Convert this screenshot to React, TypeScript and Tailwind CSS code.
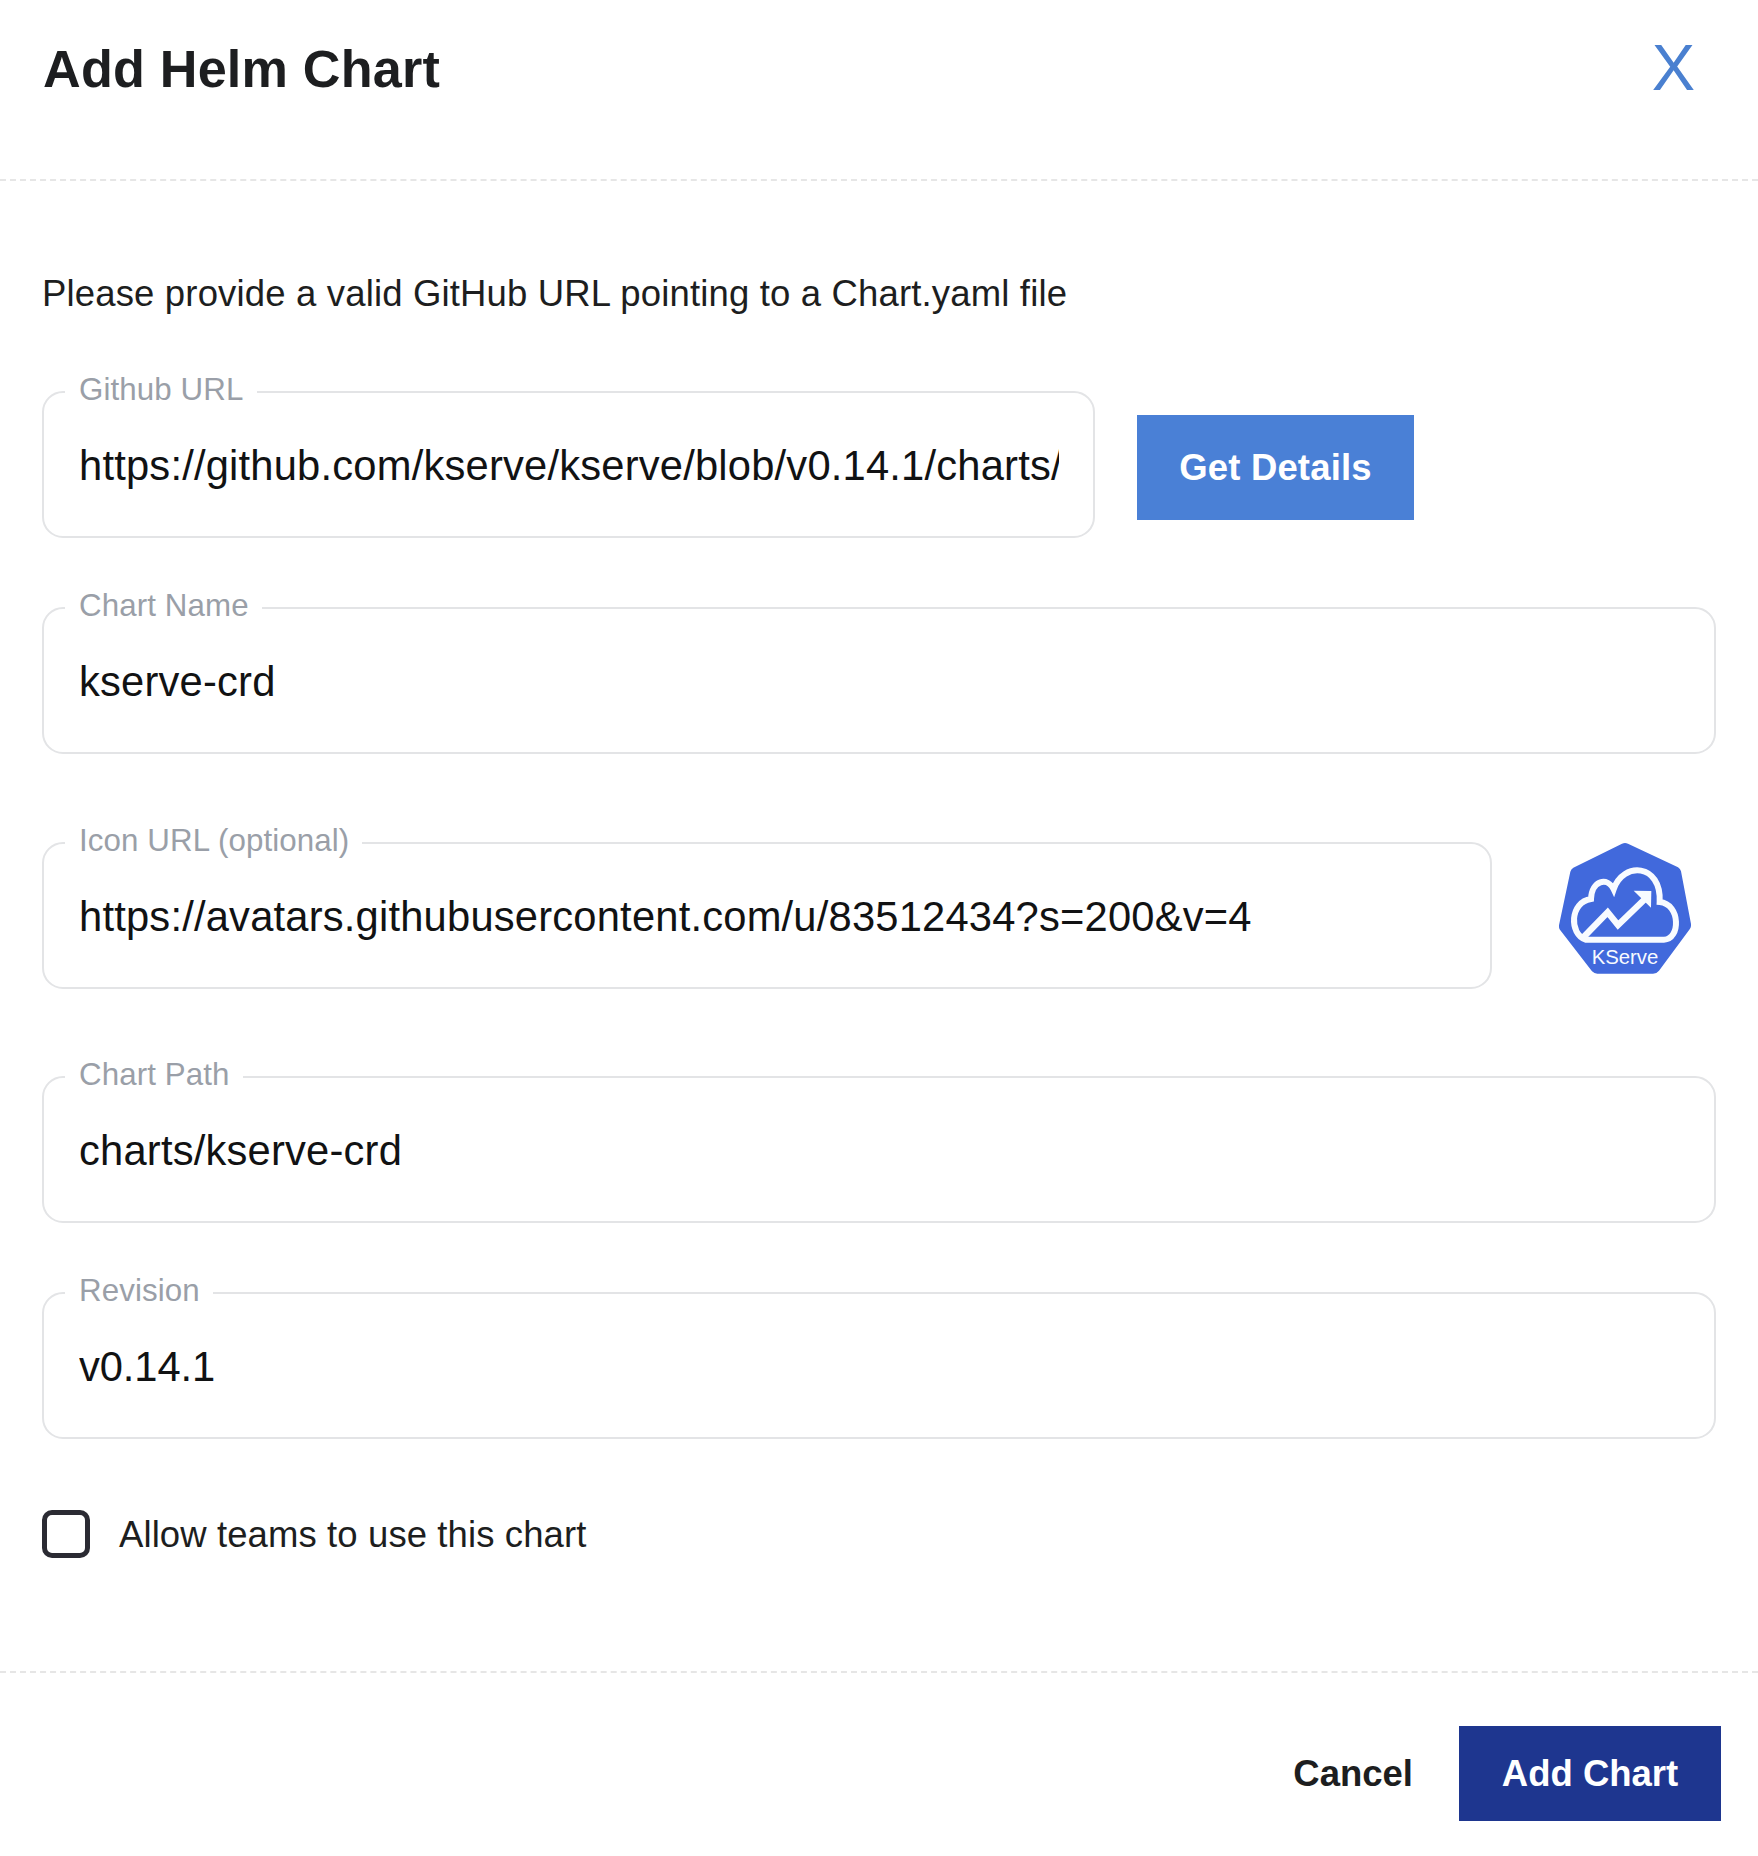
import React from "react";

type FieldProps = {
  label: string;
  value: string;
  className?: string;
  inputClassName?: string;
};

function Field({ label, value, className = "", inputClassName = "tracking-[0.2px]" }: FieldProps) {
  return (
    <fieldset
      className={`h-[164px] min-w-0 rounded-[21px] border-2 border-[#e3e4e6] px-[21px] ${className}`}
    >
      <legend className="h-[36px] pr-[13px] pb-[4px] pl-[14px] text-[31.3px] leading-[32px] tracking-[0.1px] whitespace-nowrap text-[#9a9fa8]">
        {label}
      </legend>
      <input
        readOnly
        aria-label={label}
        value={value}
        className={`mr-[13px] ml-[14px] mt-[32px] block h-[48px] w-[calc(100%-27px)] bg-transparent p-0 text-[41.7px] leading-[48px] text-[#111213] outline-none ${inputClassName}`}
      />
    </fieldset>
  );
}

function KServeLogo() {
  return (
    <svg viewBox="238 69 396 393" className="h-[131px] w-[132px] shrink-0" aria-label="KServe">
      <path
        d="M427 71Q436 67 445 71L595 142Q602 146 604 154L634 312Q635 322 630 328L538 452Q531 461 520 461H353Q344 461 337 454L242 331Q237 325 238 316L272 155Q274 147 281 143Z"
        fill="#4169dc"
      />
      <path
        d="M318 359C268 342 270 246 334 237C336 180 384 170 402 208C430 124 546 130 540 246C604 252 602 359 553 359Z"
        fill="none"
        stroke="#f8fbff"
        strokeWidth="18"
        strokeLinejoin="miter"
      />
      <path d="M312 351L384 277L415 315L499 234" fill="none" stroke="#f8fbff" strokeWidth="19" />
      <path d="M462 212L515 213L514 263Z" fill="#f8fbff" />
      <text
        x="436"
        y="432"
        textAnchor="middle"
        fontSize="61"
        fontFamily="Liberation Sans, sans-serif"
        fill="#f8fbff"
      >
        KServe
      </text>
    </svg>
  );
}

export default function App() {
  return (
    <div className="flex h-[1856px] w-[1758px] flex-col bg-white font-['Liberation_Sans',Arial,sans-serif] text-[#1d1e20]">
      <header className="flex h-[181px] items-start justify-between border-b-2 border-dashed border-[#e6e6e6] pr-[63px] pl-[43px]">
        <h1 className="mt-[39px] text-[52.2px] leading-[60px] font-bold tracking-[0.2px]">Add Helm Chart</h1>
        <button className="mt-[33px] text-[65px] leading-[70px] text-[#4a80d0]">X</button>
      </header>

      <main className="flex h-[1490px] flex-col items-start px-[42px]">
        <p className="mt-[91px] text-[36.5px] leading-[44px] tracking-[0.16px]">
          Please provide a valid GitHub URL pointing to a Chart.yaml file
        </p>
        <div className="mt-[58px] flex items-start">
          <Field
            label="Github URL"
            value="https://github.com/kserve/kserve/blob/v0.14.1/charts/kserve-crd/Chart.yaml"
            className="w-[1053px]"
          />
          <button className="mt-[41px] ml-[42px] h-[105px] w-[277px] bg-[#4a80d6] pt-[2px] text-[36.5px] font-bold tracking-[0.15px] text-white">
            Get Details
          </button>
        </div>
        <Field label="Chart Name" value="kserve-crd" className="mt-[52px] w-[1674px]" />
        <div className="mt-[71px] flex w-full items-start">
          <Field
            label="Icon URL (optional)"
            value="https://avatars.githubusercontent.com/u/83512434?s=200&v=4"
            className="w-[1450px]"
          />
          <div className="mt-[18px] ml-[67px]">
            <KServeLogo />
          </div>
        </div>
        <Field label="Chart Path" value="charts/kserve-crd" className="mt-[70px] w-[1674px]" />
        <Field
          label="Revision"
          value="v0.14.1"
          className="mt-[52px] w-[1674px]"
          inputClassName="tracking-[-0.1px]"
        />
        <label className="mt-[71px] flex h-[48px] items-center">
          <span className="h-[48px] w-[48px] rounded-[10px] border-[5px] border-[#2b2b33]" />
          <span className="ml-[29px] pt-px text-[36.5px] leading-[44px] tracking-[0.1px]">
            Allow teams to use this chart
          </span>
        </label>
      </main>

      <footer className="flex h-[185px] items-start justify-end border-t-2 border-dashed border-[#e6e6e6] pt-[53px] pr-[37px]">
        <button className="h-[95px] pt-[2px] text-[36.5px] font-bold">Cancel</button>
        <button className="ml-[46px] h-[95px] w-[262px] bg-[#1e368f] pt-[2px] text-[36.5px] font-bold text-white">
          Add Chart
        </button>
      </footer>
    </div>
  );
}
